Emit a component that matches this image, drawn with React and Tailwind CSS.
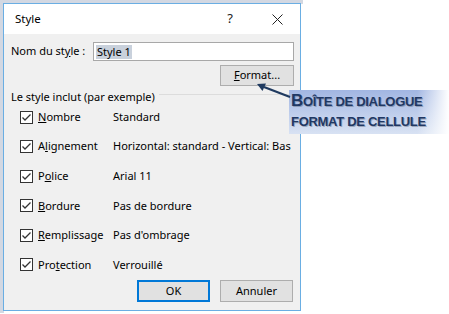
import React from 'react';

const rows = [
  { pre: '', key: 'N', post: 'ombre', value: 'Standard' },
  { pre: 'A', key: 'l', post: 'ignement', value: 'Horizontal: standard - Vertical: Bas' },
  { pre: 'P', key: 'o', post: 'lice', value: 'Arial 11' },
  { pre: '', key: 'B', post: 'ordure', value: 'Pas de bordure' },
  { pre: '', key: 'R', post: 'emplissage', value: "Pas d'ombrage" },
  { pre: 'Pro', key: 't', post: 'ection', value: 'Verrouillé' },
];

function CheckBox() {
  return (
    <svg width="13" height="13" viewBox="0 0 13 13" className="shrink-0">
      <rect x="0.5" y="0.5" width="12" height="12" fill="#ffffff" stroke="#333333" />
      <path d="M2.5 6.5 L5 9 L10.5 3.5" fill="none" stroke="#333333" strokeWidth="1.3" />
    </svg>
  );
}

function Button({ children, primary }) {
  return (
    <div
      className={
        'w-[73px] h-[22px] flex items-center justify-center bg-[#e1e1e1] ' +
        (primary ? 'border-2 border-[#0078d7]' : 'border border-[#adadad]')
      }
    >
      {children}
    </div>
  );
}

export default function App() {
  return (
    <div
      className="relative w-[449px] h-[314px] bg-white overflow-hidden text-[11px] text-black"
      style={{ fontFamily: '"Noto Sans", "Liberation Sans", sans-serif' }}
    >
      <div className="w-[303px] h-[313px] border-t-4 border-l-4 border-[#d3d8e2]">
        <div className="w-[298px] h-[308px] -mt-px -ml-px border border-[#6aaee3] flex flex-col">
          {/* title bar */}
          <div className="h-[30px] bg-white flex items-center pl-[11px] pr-[17px] shrink-0">
            <span className="text-[11.5px]">Style</span>
            <span className="ml-auto mr-[39px] text-[13px] text-[#222]">?</span>
            <svg width="11" height="11" viewBox="0 0 11 11">
              <path d="M0.5 0.5 L10.5 10.5 M10.5 0.5 L0.5 10.5" stroke="#222" strokeWidth="1" />
            </svg>
          </div>

          {/* body */}
          <div className="flex-1 bg-[#f0f0f0] pl-[7px] pr-[6px] pt-[8px] flex flex-col">
            <div className="flex items-center h-[19px]">
              <span className="w-[82px]">
                Nom du st<span className="underline">y</span>le :
              </span>
              <div className="flex-1 h-[19px] bg-white border border-[#a8a8a8] flex items-center pl-[2px]">
                <span className="bg-[#c9d1dc] px-[1px] leading-[14px]">Style 1</span>
              </div>
            </div>

            <div className="flex justify-end mt-[4px]">
              <div className="w-[74px] h-[21px] flex items-center justify-center bg-[#e1e1e1] border border-[#adadad]">
                <span>
                  <span className="underline">F</span>ormat...
                </span>
              </div>
            </div>

            <div className="flex items-center h-[16px] mt-[3px]">
              <span>Le style inclut (par exemple)</span>
              <div className="flex-1 h-px bg-[#dcdcdc] ml-[4px] -mt-[5px]" />
            </div>

            <div className="flex flex-col gap-[7.6px] pl-[9px] mt-px">
              {rows.map((r) => (
                <div key={r.post} className="h-[22px] flex items-center">
                  <CheckBox />
                  <span className="ml-[5px] w-[75px]">
                    {r.pre}
                    <span className="underline">{r.key}</span>
                    {r.post}
                  </span>
                  <span className="whitespace-nowrap">{r.value}</span>
                </div>
              ))}
            </div>

            <div className="flex justify-end gap-[10px] mt-[4px] pr-px">
              <Button primary>OK</Button>
              <Button>Annuler</Button>
            </div>
          </div>
        </div>
      </div>

      {/* callout */}
      <div className="absolute left-[289px] top-[90px] w-[160px] h-[44px] bg-linear-to-b from-[#a2b6e2] to-[#d8e2f3]">
        <div className="absolute inset-0 bg-linear-to-r from-transparent from-[80%] to-white" />
        <div
          className="relative pl-[2px] pt-[1px] font-bold text-[#1f3864] leading-[20px] tracking-[-0.3px]"
          style={{ fontFamily: '"Liberation Sans", sans-serif', textShadow: '1px 1px 0 rgba(90,100,120,0.45)' }}
        >
          <div className="whitespace-nowrap text-[13px]">
            <span className="text-[17px]">B</span>OÎTE DE DIALOGUE
          </div>
          <div className="whitespace-nowrap text-[13px]">FORMAT DE CELLULE</div>
        </div>
      </div>

      {/* arrow */}
      <svg className="absolute left-0 top-0 pointer-events-none" width="449" height="314">
        <path d="M290 97 L264 87" stroke="#1f3a60" strokeWidth="2.2" fill="none" />
        <path d="M257 84 L266 83.5 L262.5 91 Z" fill="#1f3a60" />
      </svg>
    </div>
  );
}
